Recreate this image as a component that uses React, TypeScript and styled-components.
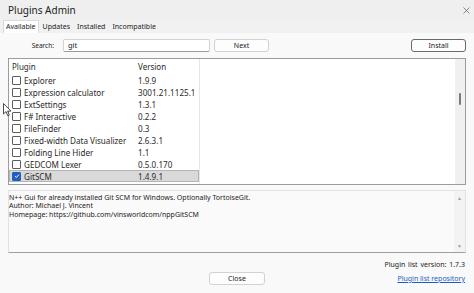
import React from 'react'
import styled, { createGlobalStyle } from 'styled-components'
import { X } from 'lucide-react'

const GlobalStyle = createGlobalStyle`
  html, body {
    margin: 0;
    padding: 0;
    background: #f9f9f9;
  }
  body {
    font-family: "Noto Sans", "Open Sans", sans-serif;
    color: #1b1b1b;
  }
`

const StyledWindow = styled.div`
  position: relative;
  width: 474px;
  height: 293px;
  display: flex;
  flex-direction: column;
  background: #f9f9f9;
  overflow: hidden;
`

const StyledTitleBar = styled.div`
  height: 20px;
  display: flex;
  align-items: center;
  justify-content: space-between;
  padding: 0 2px 0 8px;
  background: #efefef;
  font-size: 10px;
  color: #222;
`

const StyledTabs = styled.div`
  display: flex;
  align-items: flex-end;
  height: 13px;
  padding-left: 3px;
  background: #f1f1f1;
`

const StyledTab = styled.div<{ active?: boolean }>`
  height: 12px;
  line-height: 12px;
  padding: 0 2px;
  margin-right: 1px;
  font-size: 7px;
  color: #1b1b1b;
  background: ${props => props.active ? '#ffffff' : 'transparent'};
  border: 1px solid ${props => props.active ? '#dadada' : 'transparent'};
  border-bottom: none;
`

const StyledContent = styled.div`
  display: flex;
  flex-direction: column;
  padding: 0 8px;
`

const StyledSearchRow = styled.div`
  display: flex;
  align-items: center;
  height: 14px;
  margin-top: 5px;
`

const StyledLabel = styled.div`
  width: 46px;
  text-align: right;
  font-size: 6.5px;
`

const StyledInput = styled.div`
  width: 141px;
  height: 11px;
  margin-left: 9px;
  padding-left: 4px;
  background: #ffffff;
  border: 1px solid #d3d3d3;
  border-bottom-color: #9a9a9a;
  border-radius: 2px;
  font-size: 7.5px;
  line-height: 11px;
`

const StyledButton = styled.div<{ primary?: boolean }>`
  width: 53px;
  height: 11px;
  display: flex;
  align-items: center;
  justify-content: center;
  background: #fdfdfd;
  border: 1px solid ${props => props.primary ? '#6a6a6a' : '#d2d2d2'};
  border-radius: 3px;
  font-size: 7px;
  color: #1b1b1b;
`

const StyledNext = styled(StyledButton)`
  margin-left: 4px;
`

const StyledInstall = styled(StyledButton)`
  margin-left: auto;
`

const StyledList = styled.div`
  display: flex;
  height: 125px;
  margin-top: 6px;
  background: #ffffff;
  border: 1px solid #9c9c9c;
`

const StyledColumns = styled.div`
  width: 190px;
  display: flex;
  flex-direction: column;
  border-right: 1px solid #e6e6e6;
`

const StyledHeader = styled.div`
  display: grid;
  grid-template-columns: 126px 1fr;
  height: 15px;
  align-items: center;
  padding-left: 3px;
  font-size: 8px;
  color: #2a2a2a;
`

const StyledRow = styled.div<{ selected?: boolean }>`
  display: grid;
  grid-template-columns: 126px 1fr;
  height: 12px;
  align-items: center;
  padding-left: 3px;
  font-size: 8.1px;
  color: #2a2a2a;
  background: ${props => props.selected ? '#d9d9d9' : 'transparent'};
  box-shadow: ${props => props.selected ? 'inset 0 0 0 1px #b4b4b4' : 'none'};
`

const StyledName = styled.div`
  display: flex;
  align-items: center;
  gap: 3px;
  white-space: nowrap;
`

const StyledCheck = styled.div<{ checked?: boolean }>`
  width: 7px;
  height: 7px;
  display: flex;
  align-items: center;
  justify-content: center;
  border: 1px solid ${props => props.checked ? '#1f5fbf' : '#5c5c5c'};
  border-radius: 1px;
  background: ${props => props.checked ? '#1f5fbf' : '#ffffff'};
`

const StyledFill = styled.div`
  flex: 1;
`

const StyledScrollTrack = styled.div`
  width: 10px;
  display: flex;
  justify-content: center;
  padding-top: 34px;
  background: #f0f0f0;
`

const StyledThumb = styled.div`
  width: 2px;
  height: 12px;
  border-radius: 1px;
  background: #7a7a7a;
`

const StyledDescription = styled.div`
  display: flex;
  height: 61px;
  margin-top: 5px;
  background: #fafafa;
  border: 1px solid #e2e2e2;
  border-bottom-color: #a0a0a0;
`

const StyledDescText = styled.div`
  flex: 1;
  padding: 3px 0;
  font-size: 7px;
  line-height: 8.3px;
  color: #222;
`

const StyledDescScroll = styled.div`
  width: 11px;
  display: flex;
  flex-direction: column;
  align-items: center;
  justify-content: space-between;
  padding: 4px 0 3px;
  background: #f3f3f3;
  font-size: 5px;
  color: #a0a0a0;
`

const StyledFooter = styled.div`
  display: grid;
  grid-template-columns: 1fr 56px 1fr;
  grid-template-rows: 10px 13px;
  row-gap: 3px;
  padding: 6px 8px 0;
  font-size: 7px;
`

const StyledVersion = styled.div`
  grid-column: 3;
  grid-row: 1;
  justify-self: end;
  align-self: center;
  padding-right: 1px;
  word-spacing: 1px;
`

const StyledClose = styled(StyledButton)`
  grid-column: 2;
  grid-row: 2;
  width: 54px;
`

const StyledLink = styled.a`
  grid-column: 3;
  grid-row: 2;
  justify-self: end;
  align-self: center;
  padding-right: 1px;
  color: #1a5dc8;
  text-decoration: underline;
  cursor: pointer;
`

const StyledPointer = styled.svg`
  position: absolute;
  left: 3px;
  top: 103px;
`

const plugins = [
  { name: 'Explorer', version: '1.9.9' },
  { name: 'Expression calculator', version: '3001.21.1125.1' },
  { name: 'ExtSettings', version: '1.3.1' },
  { name: 'F# Interactive', version: '0.2.2' },
  { name: 'FileFinder', version: '0.3' },
  { name: 'Fixed-width Data Visualizer', version: '2.6.3.1' },
  { name: 'Folding Line Hider', version: '1.1' },
  { name: 'GEDCOM Lexer', version: '0.5.0.170' },
  { name: 'GitSCM', version: '1.4.9.1', checked: true },
]

const tabs = ['Available', 'Updates', 'Installed', 'Incompatible']

const App = () => {
  return (
    <StyledWindow>
      <GlobalStyle />
      <StyledTitleBar>
        <span>Plugins Admin</span>
        <X size={11} strokeWidth={1.2} color="#333" />
      </StyledTitleBar>
      <StyledTabs>
        {tabs.map((tab, i) => (
          <StyledTab key={tab} active={i === 0}>{tab}</StyledTab>
        ))}
      </StyledTabs>
      <StyledContent>
        <StyledSearchRow>
          <StyledLabel>Search:</StyledLabel>
          <StyledInput>git</StyledInput>
          <StyledNext>Next</StyledNext>
          <StyledInstall primary>Install</StyledInstall>
        </StyledSearchRow>
        <StyledList>
          <StyledColumns>
            <StyledHeader>
              <span>Plugin</span>
              <span>Version</span>
            </StyledHeader>
            {plugins.map(p => (
              <StyledRow key={p.name} selected={p.checked}>
                <StyledName>
                  <StyledCheck checked={p.checked}>
                    {p.checked && (
                      <svg width="6" height="6" viewBox="0 0 6 6">
                        <path d="M1 3.2 L2.4 4.5 L5 1.5" fill="none" stroke="#fff" strokeWidth="1" />
                      </svg>
                    )}
                  </StyledCheck>
                  {p.name}
                </StyledName>
                <span>{p.version}</span>
              </StyledRow>
            ))}
          </StyledColumns>
          <StyledFill />
          <StyledScrollTrack>
            <StyledThumb />
          </StyledScrollTrack>
        </StyledList>
        <StyledDescription>
          <StyledDescText>
            N++ Gui for already installed Git SCM for Windows. Optionally TortoiseGit.<br />
            Author: Michael J. Vincent<br />
            Homepage: https://github.com/vinsworldcom/nppGitSCM
          </StyledDescText>
          <StyledDescScroll>
            <span>▲</span>
            <span>▼</span>
          </StyledDescScroll>
        </StyledDescription>
      </StyledContent>
      <StyledFooter>
        <StyledVersion>Plugin list version: 1.7.3</StyledVersion>
        <StyledClose>Close</StyledClose>
        <StyledLink>Plugin list repository</StyledLink>
      </StyledFooter>
      <StyledPointer width="9" height="14" viewBox="0 0 9 14">
        <path d="M0.5 0.5 L0.5 11 L3 8.6 L4.8 12.8 L6.3 12.1 L4.6 8.1 L8 8.1 Z" fill="#fff" stroke="#222" strokeWidth="0.8" />
      </StyledPointer>
    </StyledWindow>
  )
}

export default App
